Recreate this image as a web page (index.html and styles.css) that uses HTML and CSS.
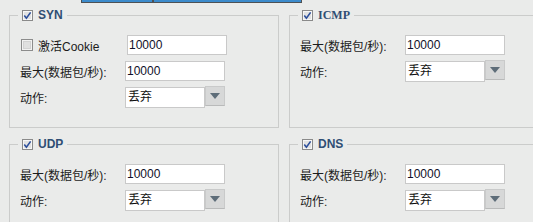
FILE: index.html
```html
<!DOCTYPE html>
<html lang="zh-CN">
<head>
<meta charset="utf-8">
<title>防护设置</title>
<link rel="stylesheet" href="styles.css">
</head>
<body>
<div class="tabs"><span class="tab t1"></span><span class="tab t2"></span></div>
<div class="groups">
  <fieldset class="group">
    <legend class="legend">
      <svg class="cb" width="11" height="11" viewBox="0 0 11 11"><rect x="0.5" y="0.5" width="10" height="10" fill="#ececec" stroke="#8a8a8a"/><rect x="1.5" y="1.5" width="8" height="8" fill="#e2e2e2" stroke="#f7f7f7"/><path d="M2.3 5.6 L4.4 8.2 L8.6 2.4" fill="none" stroke="#2c4f9c" stroke-width="1.6"/></svg>
      <span class="title">SYN</span>
    </legend>
    <div class="rows">
      <div class="row">
        <label class="lbl cbl"><svg class="cb" width="12" height="12" viewBox="0 0 12 12"><rect x="0.5" y="0.5" width="11" height="11" fill="#f2f2f2" stroke="#8c8c8c"/><rect x="2.5" y="2.5" width="7" height="7" fill="#e0e0e0" stroke="#d2d2d2"/></svg>激活Cookie</label>
        <span class="field shift">10000</span>
      </div>
      <div class="row">
        <span class="lbl">最大(数据包/秒):</span>
        <span class="field">10000</span>
      </div>
      <div class="row">
        <span class="lbl">动作:</span>
        <div class="combo"><span class="combo-text">丢弃</span><span class="combo-btn"><svg width="10" height="6" viewBox="0 0 10 6"><polygon points="0,0 10,0 5,6" fill="#5e6d79"/></svg></span></div>
      </div>
    </div>
  </fieldset>

  <fieldset class="group">
    <legend class="legend">
      <svg class="cb" width="11" height="11" viewBox="0 0 11 11"><rect x="0.5" y="0.5" width="10" height="10" fill="#ececec" stroke="#8a8a8a"/><rect x="1.5" y="1.5" width="8" height="8" fill="#e2e2e2" stroke="#f7f7f7"/><path d="M2.3 5.6 L4.4 8.2 L8.6 2.4" fill="none" stroke="#2c4f9c" stroke-width="1.6"/></svg>
      <span class="title serif">ICMP</span>
    </legend>
    <div class="rows">
      <div class="row">
        <span class="lbl">最大(数据包/秒):</span>
        <span class="field">10000</span>
      </div>
      <div class="row">
        <span class="lbl">动作:</span>
        <div class="combo"><span class="combo-text">丢弃</span><span class="combo-btn"><svg width="10" height="6" viewBox="0 0 10 6"><polygon points="0,0 10,0 5,6" fill="#5e6d79"/></svg></span></div>
      </div>
    </div>
  </fieldset>

  <fieldset class="group">
    <legend class="legend">
      <svg class="cb" width="11" height="11" viewBox="0 0 11 11"><rect x="0.5" y="0.5" width="10" height="10" fill="#ececec" stroke="#8a8a8a"/><rect x="1.5" y="1.5" width="8" height="8" fill="#e2e2e2" stroke="#f7f7f7"/><path d="M2.3 5.6 L4.4 8.2 L8.6 2.4" fill="none" stroke="#2c4f9c" stroke-width="1.6"/></svg>
      <span class="title">UDP</span>
    </legend>
    <div class="rows">
      <div class="row">
        <span class="lbl">最大(数据包/秒):</span>
        <span class="field">10000</span>
      </div>
      <div class="row">
        <span class="lbl">动作:</span>
        <div class="combo"><span class="combo-text">丢弃</span><span class="combo-btn"><svg width="10" height="6" viewBox="0 0 10 6"><polygon points="0,0 10,0 5,6" fill="#5e6d79"/></svg></span></div>
      </div>
    </div>
  </fieldset>

  <fieldset class="group">
    <legend class="legend">
      <svg class="cb" width="11" height="11" viewBox="0 0 11 11"><rect x="0.5" y="0.5" width="10" height="10" fill="#ececec" stroke="#8a8a8a"/><rect x="1.5" y="1.5" width="8" height="8" fill="#e2e2e2" stroke="#f7f7f7"/><path d="M2.3 5.6 L4.4 8.2 L8.6 2.4" fill="none" stroke="#2c4f9c" stroke-width="1.6"/></svg>
      <span class="title">DNS</span>
    </legend>
    <div class="rows">
      <div class="row">
        <span class="lbl">最大(数据包/秒):</span>
        <span class="field">10000</span>
      </div>
      <div class="row">
        <span class="lbl">动作:</span>
        <div class="combo"><span class="combo-text">丢弃</span><span class="combo-btn"><svg width="10" height="6" viewBox="0 0 10 6"><polygon points="0,0 10,0 5,6" fill="#5e6d79"/></svg></span></div>
      </div>
    </div>
  </fieldset>
</div>
</body>
</html>
```

FILE: styles.css
```css
html, body {
  margin: 0;
  padding: 0;
  overflow: hidden;
  background: #eaebea;
}
body {
  width: 533px;
  height: 222px;
  font-family: "Liberation Sans", "Noto Sans CJK SC", sans-serif;
  font-size: 12px;
  color: #1c1c1c;
}
.tabs {
  display: flex;
  height: 3px;
  padding-left: 81px;
}
.tab {
  height: 2px;
  background: #3c8bcc;
  border: 1px solid #4d5155;
  border-top: 0;
}
.t1 { width: 70px; }
.t2 { width: 147px; }
.groups {
  display: grid;
  grid-template-columns: 270px 270px;
  column-gap: 10px;
  row-gap: 9px;
  padding: 5px 0 0 9px;
  width: 560px;
}
.group {
  margin: 0;
  padding: 13px 10px 0 10px;
  border: 1px solid #cbcccb;
  min-width: 0;
}
.legend {
  margin-left: -2px;
  padding: 0 4px;
  height: 14px;
  line-height: 14px;
  display: flex;
  align-items: center;
  gap: 5px;
}
.cb { display: block; flex: none; }
.title {
  font-weight: bold;
  font-size: 12px;
  color: #2f4e74;
}
.serif { font-family: "Liberation Serif", serif; }
.rows {
  display: flex;
  flex-direction: column;
  gap: 6px;
  height: 92px;
}
.row {
  display: flex;
  align-items: center;
  height: 20px;
}
.lbl {
  width: 105px;
  flex: none;
  white-space: nowrap;
}
.cbl {
  display: flex;
  align-items: center;
  gap: 5px;
  padding-left: 1px;
  box-sizing: border-box;
}
.field {
  box-sizing: border-box;
  width: 100px;
  height: 20px;
  border: 1px solid #c9c9c9;
  background: #fff;
  padding-left: 1px;
  line-height: 18px;
  color: #10102a;
}
.shift { margin-left: 2px; }
.combo {
  display: flex;
  align-items: flex-start;
  height: 21px;
  margin-top: 1px;
}
.combo-text {
  box-sizing: border-box;
  width: 80px;
  height: 21px;
  border: 1px solid #c9c9c9;
  background: #fff;
  padding-left: 2px;
  line-height: 18px;
  color: #111;
}
.combo-btn {
  box-sizing: border-box;
  width: 20px;
  height: 20px;
  margin-top: -1px;
  background: #d7d8d8;
  border: 1px solid #c9caca;
  border-bottom-color: #b9baba;
  display: flex;
  align-items: center;
  justify-content: center;
}
```
